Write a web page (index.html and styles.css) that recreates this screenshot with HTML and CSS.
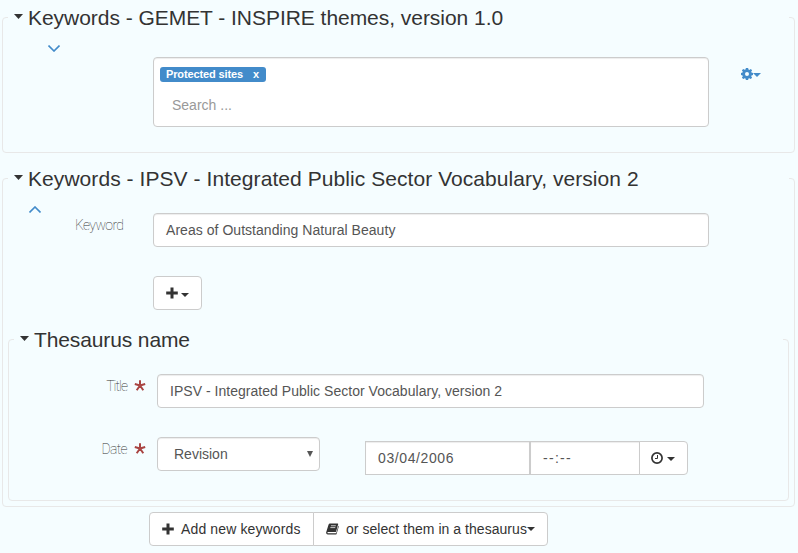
FILE: index.html
```html
<!DOCTYPE html>
<html lang="en">
<head>
<meta charset="utf-8">
<title>Keywords</title>
<link rel="stylesheet" href="styles.css">
</head>
<body>
<svg class="defs" width="0" height="0">
  <symbol id="caret" viewBox="0 0 8 4"><path d="M0 0h8L4 4z"/></symbol>
  <symbol id="toggle" viewBox="0 0 9 5"><path d="M0 0h9L4.500 5z"/></symbol>
  <symbol id="plus" viewBox="0 0 12 12"><path d="M4.500 .5h3v4h4.300v3H7.500v4h-3v-4H.2v-3h4.300z"/></symbol>
  <symbol id="star" viewBox="0 0 12 11"><path d="M6 5.500V.3M6 5.500L.8 4M6 5.500L11.200 4M6 5.500L2.700 10.200M6 5.500l3.300 4.700"/></symbol>
</svg>
<main class="editor">
  <fieldset class="group gemet">
    <legend><svg class="toggle"><use href="#toggle"/></svg><span class="t-gemet">Keywords - GEMET - INSPIRE themes, version 1.0</span></legend>
    <div class="row">
      <svg class="chevron down" viewBox="0 0 12 7"><path d="M.5 .5L6 6 11.500 .5"/></svg>
      <div class="control tagbox">
        <span class="tag"><span>Protected sites</span><span>x</span></span>
        <span class="placeholder">Search ...</span>
      </div>
      <div class="settings">
        <svg class="gear" viewBox="0 0 12 12"><path fill-rule="evenodd" d="M4.9 0h2.2l.4 1.6 .8.3L9.8 1l1.3 1.3-.9 1.4.3.9 1.5.3v2.2l-1.5.4-.3.8.9 1.4-1.4 1.4-1.4-.9-.8.3L7.1 12H4.9l-.4-1.5-.8-.3-1.4.9L.9 9.700l.9-1.400-.3-.8L0 7.100V4.900l1.500-.4.3-.8-.9-1.400L2.300.900l1.400.9.8-.3zM6 4a2 2 0 1 0 0 4 2 2 0 0 0 0-4z"/></svg><svg class="caret"><use href="#caret"/></svg>
      </div>
    </div>
  </fieldset>

  <fieldset class="group ipsv">
    <legend><svg class="toggle"><use href="#toggle"/></svg><span class="t-ipsv">Keywords - IPSV - Integrated Public Sector Vocabulary, version 2</span></legend>
    <div class="row">
      <svg class="chevron up" viewBox="0 0 12 7"><path d="M.5 6.500L6 1l5.500 5.500"/></svg>
      <span class="label keyword">Keyword</span>
      <div class="control input"><span class="t-areas">Areas of Outstanding Natural Beauty</span></div>
    </div>
    <div class="btn add"><svg class="plus"><use href="#plus"/></svg><svg class="caret"><use href="#caret"/></svg></div>
    <fieldset class="group thesaurus">
      <legend><svg class="toggle"><use href="#toggle"/></svg><span class="t-thes">Thesaurus name</span></legend>
      <div class="row field">
        <div class="req"><span class="label title">Title</span><svg class="star"><use href="#star"/></svg></div>
        <div class="control input"><span class="t-voc">IPSV - Integrated Public Sector Vocabulary, version 2</span></div>
      </div>
      <div class="row field date-row">
        <div class="req"><span class="label date">Date</span><svg class="star"><use href="#star"/></svg></div>
        <div class="control input select"><span class="t-rev">Revision</span><svg class="arrow" viewBox="0 0 6 6"><path d="M0 0h6L3 6z"/></svg></div>
        <div class="datetime">
          <div class="control input day"><span class="t-day">03/04/2006</span></div>
          <div class="control input time"><span class="t-time">--:--</span></div>
          <div class="btn clock-btn"><svg class="clock" viewBox="0 0 12 12"><circle cx="6" cy="6" r="5.100"/><path d="M6.500 3v3.500H4"/></svg><svg class="caret"><use href="#caret"/></svg></div>
        </div>
      </div>
    </fieldset>
  </fieldset>

  <div class="actions">
    <div class="btn new"><svg class="plus"><use href="#plus"/></svg><span class="t-new">Add new keywords</span></div>
    <div class="btn pick"><svg class="book" viewBox="0 0 14 12"><path d="M4.300 0h8.200q.9.100.6 1L10.900 8.700q-.2.600-.9.600H2.300q-.9.100-.8.700t.8.600h8.100q.5 0 .7-.6L13.300 2.600q.6.300.4 1L11.500 11q-.3 1-1.300 1H2Q-.2 11.700.2 9.400L2.700 1.300Q3.100 0 4.300 0z"/><path class="lines" d="M5.300 2.500h5.300M4.700 4.500h5.300"/></svg><span class="t-pick">or select them in a thesaurus</span><svg class="caret"><use href="#caret"/></svg></div>
  </div>
</main>
</body>
</html>
```

FILE: styles.css
```css
* { box-sizing: border-box; }
body {
  margin: 0;
  background: #f5fdff;
  color: #333;
  font: 14px/20px "Liberation Sans", Arial, sans-serif;
  white-space: nowrap;
}
svg { display: block; flex: none; fill: currentColor; }
.defs { position: absolute; }
.editor { padding: 2px 3px 0 2px; }

.group {
  margin: 0 0 10px;
  padding: 0 5px 5px;
  border: 1px solid #e8e8e8;
  border-radius: 4px;
  min-width: 0;
}
.gemet { height: 151px; }
.ipsv { height: 344px; margin-bottom: 5px; }
.thesaurus { height: 177px; margin: 14px 0 0; }
legend {
  display: flex;
  align-items: center;
  width: 100%;
  height: 30px;
  padding: 0 0 0 6px;
  font-size: 21px;
  line-height: 30px;
}
legend span { padding-top: 2px; }
.toggle { width: 9px; height: 5px; margin: 0 5px 2px 0; }
.t-gemet { letter-spacing: -.04px; }
.t-ipsv { letter-spacing: .065px; }
.t-thes { letter-spacing: -.12px; }
.t-areas { letter-spacing: .04px; }
.t-voc { letter-spacing: .03px; }
.t-day { letter-spacing: .6px; }
.t-time { letter-spacing: 1.3px; }
.t-new { letter-spacing: .13px; }
.t-pick { letter-spacing: .04px; }

.row { display: flex; align-items: flex-start; }
.control {
  background: #fff;
  border: 1px solid #ccc;
  border-radius: 4px;
  box-shadow: inset 0 1px 1px rgba(0, 0, 0, .075);
  color: #555;
}
.input { display: flex; align-items: center; height: 34px; padding: 0 12px; }
.chevron { width: 12px; height: 7px; fill: none; stroke: #428bca; stroke-width: 1.6; }
.down { margin: 13px 93px 0 40px; }
.up { margin: 13px 34px 0 21px; }

.tagbox {
  display: flex;
  flex-direction: column;
  align-items: flex-start;
  width: 556px;
  height: 70px;
  margin-top: 25px;
  padding: 9px 6px;
}
.tag {
  display: flex;
  justify-content: space-between;
  width: 106px;
  height: 15px;
  padding: 0 7px 0 6px;
  border-radius: 3px;
  background: #428bca;
  color: #fff;
  font-size: 11px;
  font-weight: bold;
  line-height: 14px;
  letter-spacing: -.13px;
}
.placeholder { margin: 13px 0 0 12px; color: #999; }
.settings { display: flex; align-items: center; margin: 36px 0 0 32px; color: #428bca; }
.gear { width: 12px; height: 12px; }
.caret { width: 8px; height: 4px; }
.settings .caret { margin-top: 1px; }

.label { color: #333; font-family: Roboto, sans-serif; font-weight: 100; letter-spacing: -.65px; }
.keyword { width: 50px; margin: 22px 28px 0 0; }
.title { letter-spacing: -.95px; }
.ipsv > .row .input { width: 556px; margin-top: 20px; }
.btn {
  display: flex;
  align-items: center;
  height: 34px;
  padding: 0 12px;
  background: #fff;
  border: 1px solid #ccc;
  border-radius: 4px;
}
.plus { width: 12px; height: 12px; }
.add { width: 49px; margin: 29px 0 0 145px; }
.add .caret { margin: 3px 0 0 3px; }

.field { padding-top: 20px; }
.field > .input { width: 547px; }
.req { display: flex; justify-content: flex-end; width: 132px; margin: 2px 11px 0 0; }
.star { width: 12px; height: 11px; margin: 4px 0 0 7px; fill: none; stroke: #a94442; stroke-width: 2; }
.date-row { padding-top: 29px; }
.date-row > .select { width: 163px; padding: 0 6px 0 16px; justify-content: space-between; }
.arrow { width: 6px; height: 6px; }
.datetime { display: flex; margin: 4px 0 0 45px; }
.day { width: 165px; border-radius: 0; }
.time { width: 110px; border-radius: 0; }
.clock-btn { width: 49px; margin-left: -1px; padding: 0 11px; border-radius: 0 4px 4px 0; }
.clock { width: 12px; height: 12px; fill: none; stroke: currentColor; stroke-width: 1.7; }
.clock path { stroke-width: 1; }
.clock-btn .caret { margin: 1px 0 0 4px; }

.actions { display: flex; margin-left: 147px; }
.new { width: 165px; border-radius: 4px 0 0 4px; }
.new .plus { margin-right: 7px; }
.pick { width: 235px; margin-left: -1px; border-radius: 0 4px 4px 0; }
.book { width: 13px; height: 12px; margin-right: 7px; }
.lines { stroke: #fff; stroke-width: .8; }
```
